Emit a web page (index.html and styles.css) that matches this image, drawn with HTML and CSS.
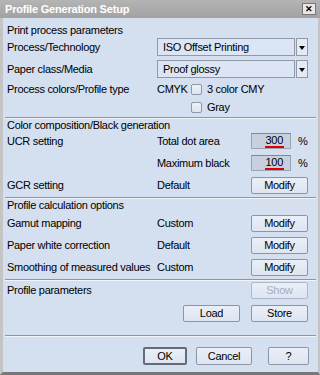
FILE: index.html
```html
<!DOCTYPE html>
<html>
<head>
<meta charset="utf-8" />
<title>Profile Generation Setup</title>
<link rel="stylesheet" href="styles.css">
</head>
<body>
<div class="dialog">
	<div class="titlebar">
		<span class="title">Profile Generation Setup</span>
		<span class="close">&#x2715;</span>
	</div>

	<div class="content">
		<div class="row head h1">Print process parameters</div>

		<div class="row r18">
			<span class="label">Process/Technology</span>
			<div class="select"><span class="field">ISO Offset Printing</span><span class="arrow"></span></div>
		</div>
		<div class="row r18 gap4">
			<span class="label">Paper class/Media</span>
			<div class="select"><span class="field">Proof glossy</span><span class="arrow"></span></div>
		</div>
		<div class="row r18 gap2">
			<span class="label">Process colors/Profile type</span>
			<span class="cmyk">CMYK</span>
			<span class="check"></span><span>3 color CMY</span>
		</div>
		<div class="row r18">
			<span class="label"></span>
			<span class="cmyk"></span>
			<span class="check"></span><span>Gray</span>
		</div>

		<div class="sep"></div>
		<div class="row head h2">Color composition/Black generation</div>

		<div class="row">
			<span class="label">UCR setting</span>
			<span class="mid">Total dot area</span>
			<span class="num"><span class="val">300</span></span><span class="pct">%</span>
		</div>
		<div class="row">
			<span class="label"></span>
			<span class="mid">Maximum black</span>
			<span class="num"><span class="val">100</span></span><span class="pct">%</span>
		</div>
		<div class="row">
			<span class="label">GCR setting</span>
			<span class="mid">Default</span>
			<span class="btn">Modify</span>
		</div>

		<div class="sep"></div>
		<div class="row head h3">Profile calculation options</div>

		<div class="row gap1">
			<span class="label">Gamut mapping</span>
			<span class="mid">Custom</span>
			<span class="btn">Modify</span>
		</div>
		<div class="row">
			<span class="label">Paper white correction</span>
			<span class="mid">Default</span>
			<span class="btn">Modify</span>
		</div>
		<div class="row">
			<span class="label">Smoothing of measured values</span>
			<span class="mid">Custom</span>
			<span class="btn">Modify</span>
		</div>

		<div class="sep"></div>
		<div class="row r18">
			<span class="label">Profile parameters</span>
			<span class="mid"></span>
			<span class="btn off">Show</span>
		</div>
		<div class="row r18 gap5">
			<span class="label"></span>
			<span class="mid right"><span class="btn">Load</span></span>
			<span class="btn">Store</span>
		</div>

		<div class="sep bottom"></div>
		<div class="actions">
			<span class="btn ok">OK</span>
			<span class="btn cancel">Cancel</span>
			<span class="btn help">?</span>
		</div>
	</div>
</div>
</body>
</html>
```

FILE: styles.css
```css
body {
	margin: 0;
	background: #d4dff0;
	font-family: "Liberation Sans", Arial, sans-serif;
	font-size: 11px;
	letter-spacing: -0.3px;
	color: #000;
}

.dialog {
	width: 320px;
	height: 375px;
	box-sizing: border-box;
	background: #d4dff0;
	border-left: 3px solid #c4c4c4;
	border-right: 2px solid #c4c4c4;
	border-bottom: 3px solid #777;
	display: flex;
	flex-direction: column;
}

.titlebar {
	height: 18px;
	margin-left: -3px;
	margin-right: -2px;
	background: linear-gradient(#b4b4b4, #a2a2a2);
	display: flex;
	align-items: center;
	justify-content: space-between;
	padding: 0 4px 0 5px;
}

.title {
	color: #fff;
	font-weight: bold;
	letter-spacing: -0.2px;
}

.close {
	width: 12px;
	height: 10px;
	background: #e8e8e8;
	border: 1px solid #777;
	font-size: 9px;
	line-height: 10px;
	text-align: center;
	font-weight: bold;
	letter-spacing: 0;
}

.content {
	padding: 0 10px 0 4px;
	display: flex;
	flex-direction: column;
}

.row {
	height: 22px;
	display: flex;
	align-items: center;
	white-space: nowrap;
}

.r18 { height: 18px; }
.gap1 { margin-top: 1px; }
.gap2 { margin-top: 2px; }
.gap4 { margin-top: 4px; }
.gap5 { margin-top: 5px; }

.head.h1 { margin-top: 3px; height: 17px; }
.head.h2 { height: 11px; }
.head.h3 { height: 12px; }

.label {
	width: 150px;
	flex: none;
}

.mid {
	width: 94px;
	flex: none;
}

.mid.right {
	display: flex;
	justify-content: flex-end;
	padding-right: 11px;
	box-sizing: border-box;
}

.cmyk {
	width: 34px;
	flex: none;
}

.check {
	width: 9px;
	height: 9px;
	border: 1px solid #8c97a8;
	border-radius: 2px;
	background: linear-gradient(#eef2f8, #dde4ef);
	margin-right: 5px;
}

.select {
	display: flex;
	height: 18px;
	width: 151px;
}

.field {
	flex: 1;
	border: 1px solid #8f99a9;
	background: #dce5f3;
	padding-left: 5px;
	line-height: 16px;
}

.arrow {
	width: 10px;
	margin-left: 1px;
	border: 1px solid #8f99a9;
	background: #e4eaf4;
	position: relative;
}

.arrow::after {
	content: "";
	position: absolute;
	left: 2px;
	top: 7px;
	border-left: 3px solid transparent;
	border-right: 3px solid transparent;
	border-top: 4px solid #000;
}

.num {
	width: 40px;
	height: 16px;
	box-sizing: border-box;
	background: #c6d0df;
	border: 1px solid #9aa4b4;
	border-top-color: #7d8797;
	display: flex;
	justify-content: flex-end;
	padding-right: 6px;
}

.val {
	line-height: 13px;
	border-bottom: 2px solid #e00000;
	padding: 0 1px;
}

.pct {
	margin-left: 7px;
}

.btn {
	width: 57px;
	height: 17px;
	box-sizing: border-box;
	border: 1px solid #8b95a6;
	border-radius: 2px;
	background: linear-gradient(#eaeff7, #dde5f1);
	display: flex;
	align-items: center;
	justify-content: center;
	flex: none;
}

.btn.off {
	color: #a6afbd;
	border-color: #b0b9c7;
}

.sep {
	height: 1px;
	margin: 1px -8px 0 -2px;
	background: #8d96a3;
	border-bottom: 1px solid #f0f4fa;
}

.sep.bottom {
	margin-top: 13px;
}

.actions {
	display: flex;
	margin-top: 10px;
	padding-left: 136px;
}

.btn.ok {
	width: 44px;
	height: 18px;
	border: 2px solid #646c78;
}

.btn.cancel {
	width: 56px;
	height: 18px;
	margin-left: 9px;
}

.btn.help {
	width: 41px;
	height: 18px;
	margin-left: 16px;
}
```
